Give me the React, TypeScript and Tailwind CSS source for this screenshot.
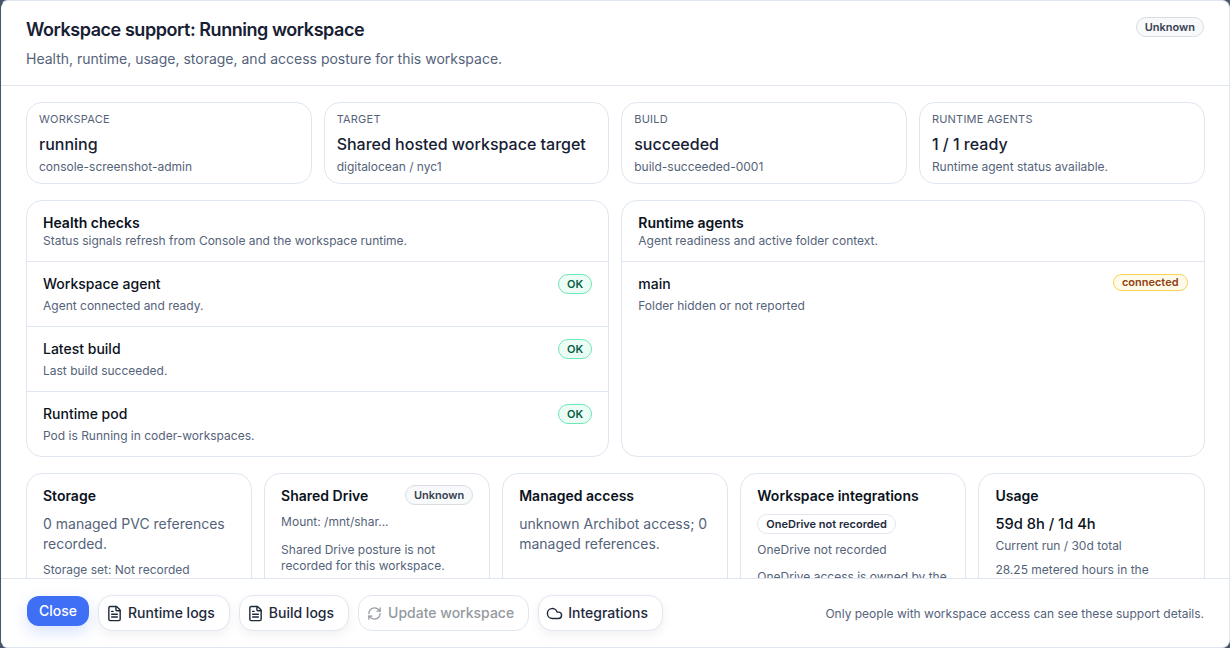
import { Cloud, FileText, RefreshCw } from "lucide-react";

const stats = [
  { label: "Workspace", value: "running", sub: "console-screenshot-admin" },
  { label: "Target", value: "Shared hosted workspace target", sub: "digitalocean / nyc1" },
  { label: "Build", value: "succeeded", sub: "build-succeeded-0001" },
  { label: "Runtime agents", value: "1 / 1 ready", sub: "Runtime agent status available." },
];

const checks = [
  { name: "Workspace agent", detail: "Agent connected and ready." },
  { name: "Latest build", detail: "Last build succeeded." },
  { name: "Runtime pod", detail: "Pod is Running in coder-workspaces." },
];

function Badge({ children, className }: { children: string; className: string }) {
  return (
    <span className={`inline-flex items-center rounded-full border px-2 text-[11px] font-semibold leading-[18px] ${className}`}>
      {children}
    </span>
  );
}

function Unknown() {
  return <Badge className="border-[#d9dce1] bg-[#f8f9fa] text-[#374151]">Unknown</Badge>;
}

function OkBadge() {
  return <Badge className="border-[#6ee7b7] bg-[#ecfdf5] text-[#065f46]">OK</Badge>;
}

function PanelHead({ title, sub }: { title: string; sub: string }) {
  return (
    <div className="h-[61px] border-b border-[#dfe6f0] px-4 pt-[13px]">
      <h3 className="text-sm font-semibold leading-[18px] text-[#0b1220]">{title}</h3>
      <p className="text-xs leading-[18px] text-[#55637a]">{sub}</p>
    </div>
  );
}

function SmallCard({ children }: { children: React.ReactNode }) {
  return <div className="h-[160px] overflow-hidden rounded-2xl border border-[#dfe6f0] bg-white px-4 pt-3">{children}</div>;
}

function FooterButton({ icon, label, disabled }: { icon: React.ReactNode; label: string; disabled?: boolean }) {
  return (
    <button
      disabled={disabled}
      className={`flex h-[36px] items-center gap-[5px] rounded-[14px] border border-[#dfe6f0] bg-white pl-[7px] pr-[14px] text-sm font-medium ${
        disabled ? "text-[#94999f] shadow-none" : "text-[#1e293b] shadow-[0_4px_12px_rgba(15,23,42,0.06)]"
      }`}
    >
      {icon}
      {label}
    </button>
  );
}

export default function App() {
  return (
    <div className="h-screen overflow-hidden bg-[#475569] font-['Inter',sans-serif]">
      <div className="flex h-[648px] flex-col overflow-hidden rounded-lg border border-[#dfe6f0] border-l-[#475569] bg-white">
        <header className="flex h-[85px] shrink-0 items-start justify-between border-b border-[#dfe6f0] px-[25px] pt-[17px]">
          <div>
            <h2 className="text-lg font-semibold leading-[24px] tracking-tight text-[#172033]">Workspace support: Running workspace</h2>
            <p className="mt-[7px] text-sm leading-[20px] text-[#55637a]">
              Health, runtime, usage, storage, and access posture for this workspace.
            </p>
          </div>
          <div className="-mt-px flex">
            <Unknown />
          </div>
        </header>

        <div className="flex-1 overflow-hidden pl-[25px] pr-[24.5px] pt-4">
          <div className="grid grid-cols-4 gap-3">
            {stats.map((s) => (
              <div key={s.label} className="h-[82px] rounded-2xl border border-[#dfe6f0] bg-white px-3 pt-[9px]">
                <div className="text-[11px] uppercase leading-[14px] tracking-[0.02em] text-[#55637a]">{s.label}</div>
                <div className="mt-[6px] text-base font-medium leading-[24px] text-[#172033]">{s.value}</div>
                <div className="mt-[3px] text-xs leading-[16px] text-[#55637a]">{s.sub}</div>
              </div>
            ))}
          </div>

          <div className="mt-4 grid h-[257px] grid-cols-2 gap-3">
            <section className="overflow-hidden rounded-2xl border border-[#dfe6f0] bg-white">
              <PanelHead title="Health checks" sub="Status signals refresh from Console and the workspace runtime." />
              {checks.map((c) => (
                <div key={c.name} className="flex h-[65px] items-start justify-between border-b border-[#dfe6f0] px-4 pt-[12px] last:border-b-0">
                  <div>
                    <div className="text-sm font-medium leading-[20px] text-[#0b1220]">{c.name}</div>
                    <div className="mt-[2px] text-xs leading-[20px] text-[#55637a]">{c.detail}</div>
                  </div>
                  <OkBadge />
                </div>
              ))}
            </section>
            <section className="overflow-hidden rounded-2xl border border-[#dfe6f0] bg-white">
              <PanelHead title="Runtime agents" sub="Agent readiness and active folder context." />
              <div className="flex items-start justify-between px-4 pt-[12px]">
                <div>
                  <div className="text-sm font-medium leading-[20px] text-[#0b1220]">main</div>
                  <div className="mt-[2px] text-xs leading-[20px] text-[#55637a]">Folder hidden or not reported</div>
                </div>
                <span className="inline-flex items-center rounded-full border border-[#fcd34d] bg-[#fffbeb] px-2 text-[11px] font-semibold leading-[15px] text-[#92400e]">
                  connected
                </span>
              </div>
            </section>
          </div>

          <div className="mt-4 grid grid-cols-5 gap-3">
            <SmallCard>
              <h3 className="text-sm font-semibold leading-[20px] text-[#0b1220]">Storage</h3>
              <p className="mt-2 text-sm leading-[20px] text-[#55637a]">0 managed PVC references recorded.</p>
              <p className="mt-[7px] text-xs leading-[18px] text-[#55637a]">Storage set: Not recorded</p>
            </SmallCard>
            <SmallCard>
              <div className="-mt-px flex items-start justify-between">
                <h3 className="mt-px text-sm font-semibold leading-[20px] text-[#0b1220]">Shared Drive</h3>
                <Unknown />
              </div>
              <p className="mt-[7px] text-xs leading-[18px] text-[#55637a]">Mount: /mnt/shar...</p>
              <p className="mt-[11px] text-xs leading-[16px] text-[#55637a]">Shared Drive posture is not recorded for this workspace.</p>
            </SmallCard>
            <SmallCard>
              <h3 className="text-sm font-semibold leading-[20px] text-[#0b1220]">Managed access</h3>
              <p className="mt-2 text-sm leading-[20px] text-[#55637a]">unknown Archibot access; 0 managed references.</p>
            </SmallCard>
            <SmallCard>
              <h3 className="text-sm font-semibold leading-[20px] text-[#0b1220]">Workspace integrations</h3>
              <div className="mt-2 flex">
                <Badge className="border-[#dfe6f0] bg-white text-[#1e293b]">OneDrive not recorded</Badge>
              </div>
              <p className="mt-[7px] text-xs leading-[18px] text-[#55637a]">OneDrive not recorded</p>
              <p className="mt-[9px] text-xs leading-[18px] text-[#55637a]">OneDrive access is owned by the workspace.</p>
            </SmallCard>
            <SmallCard>
              <h3 className="text-sm font-semibold leading-[20px] text-[#0b1220]">Usage</h3>
              <p className="mt-2 text-[14.7px] font-medium leading-[20px] text-[#0b1220]">59d 8h / 1d 4h</p>
              <p className="mt-[3px] text-xs leading-[18px] text-[#55637a]">Current run / 30d total</p>
              <p className="mt-[6px] text-xs leading-[18px] text-[#55637a]">28.25 metered hours in the current period.</p>
            </SmallCard>
          </div>
        </div>

        <footer className="flex h-[69px] shrink-0 items-start justify-between border-t border-[#dfe6f0] bg-white px-[25px] pt-[16px]">
          <div className="flex items-start gap-[9px]">
            <button className="ml-px mt-px h-[30px] rounded-[12px] bg-[#3f6ff5] px-3 text-sm font-medium text-white shadow-[0_6px_16px_rgba(63,111,245,0.2)]">
              Close
            </button>
            <FooterButton icon={<FileText size={17} />} label="Runtime logs" />
            <FooterButton icon={<FileText size={17} />} label="Build logs" />
            <FooterButton icon={<RefreshCw size={15} className="mx-px" />} label="Update workspace" disabled />
            <FooterButton icon={<Cloud size={17} />} label="Integrations" />
          </div>
          <p className="pt-[9px] text-xs leading-[20px] text-[#55637a]">Only people with workspace access can see these support details.</p>
        </footer>
      </div>
    </div>
  );
}
